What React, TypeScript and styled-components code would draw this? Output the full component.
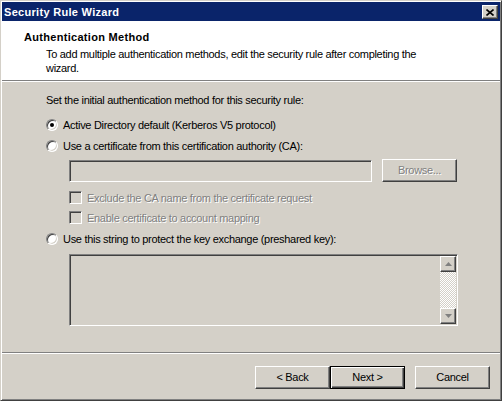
import React from "react";
import styled, { createGlobalStyle, css } from "styled-components";

const Global = createGlobalStyle`
  html, body { margin: 0; padding: 0; background: #ffffff; }
  body {
    font-family: "Liberation Sans", Arial, sans-serif;
    font-size: 11px;
    letter-spacing: -0.3px;
    color: #000;
  }
  #root { width: 503px; height: 403px; overflow: hidden; }
`;

const Window = styled.div`
  box-sizing: border-box;
  width: 502px;
  height: 401px;
  background: #d4d0c8;
  border: 1px solid;
  border-color: #d4d0c8 #404040 #404040 #d4d0c8;
  box-shadow: inset 1px 1px #ffffff, inset -1px -1px #808080;
  padding: 1px;
  display: flex;
  flex-direction: column;
`;

const TitleBar = styled.div`
  height: 19px;
  flex: 0 0 19px;
  background: #0a246a;
  display: flex;
  align-items: center;
  justify-content: space-between;
  padding: 0 2px;
`;

const TitleText = styled.span`
  color: #ffffff;
  font-weight: bold;
  font-size: 11px;
  letter-spacing: 0.3px;
`;

const raised = css`
  background: #d4d0c8;
  border: 1px solid;
  border-color: #ffffff #404040 #404040 #ffffff;
  box-shadow: inset -1px -1px #808080;
`;

const sunken = css`
  border: 1px solid;
  border-color: #808080 #ffffff #ffffff #808080;
  box-shadow: inset 1px 1px #404040, inset -1px -1px #d4d0c8;
`;

const CloseButton = styled.div`
  ${raised};
  box-sizing: border-box;
  width: 16px;
  height: 14px;
  display: flex;
  align-items: center;
  justify-content: center;
  margin-top: 1px;
`;

const Header = styled.div`
  height: 59px;
  flex: 0 0 59px;
  background: #ffffff;
  box-sizing: border-box;
  padding: 10px 60px 0 22px;
`;

const HeaderTitle = styled.div`
  font-weight: bold;
  line-height: 13px;
  letter-spacing: 0.3px;
`;

const HeaderSub = styled.div`
  margin-top: 3px;
  padding-left: 22px;
  line-height: 14px;
`;

const Separator = styled.div`
  height: 1px;
  flex: 0 0 1px;
  background: #808080;
  border-bottom: 1px solid #ffffff;
`;

const Body = styled.div`
  flex: 1;
  box-sizing: border-box;
  padding: 12px 0 0 44px;
  display: flex;
  flex-direction: column;
`;

const Text = styled.div<{ $gap?: number }>`
  line-height: 13px;
  margin-top: ${(p) => p.$gap ?? 0}px;
`;

const Row = styled.div<{ $gap: number; $indent?: number }>`
  display: flex;
  align-items: center;
  height: 13px;
  margin-top: ${(p) => p.$gap}px;
  margin-left: ${(p) => p.$indent ?? 0}px;
`;

const Radio = styled.span<{ $checked?: boolean }>`
  box-sizing: border-box;
  width: 12px;
  height: 12px;
  border-radius: 50%;
  background: #ffffff;
  border: 1px solid;
  border-color: #808080 #ffffff #ffffff #808080;
  box-shadow: inset 1px 1px #404040, inset -1px -1px #d4d0c8;
  display: flex;
  align-items: center;
  justify-content: center;
  margin-right: 5px;
  &::after {
    content: "";
    display: ${(p) => (p.$checked ? "block" : "none")};
    width: 4px;
    height: 4px;
    border-radius: 50%;
    background: #000;
  }
`;

const Checkbox = styled.span`
  ${sunken};
  box-sizing: border-box;
  width: 13px;
  height: 13px;
  background: #d4d0c8;
  margin-right: 5px;
`;

const Disabled = styled.span`
  color: #808080;
  text-shadow: 1px 1px #ffffff;
`;

const CertRow = styled.div`
  display: flex;
  align-items: center;
  margin-top: 7px;
  margin-left: 23px;
  height: 23px;
  gap: 10px;
`;

const TextBox = styled.div`
  ${sunken};
  box-sizing: border-box;
  width: 303px;
  height: 22px;
  background: #d4d0c8;
`;

const Button = styled.div<{ $default?: boolean; $disabled?: boolean }>`
  box-sizing: border-box;
  width: 75px;
  height: 23px;
  display: flex;
  align-items: center;
  justify-content: center;
  line-height: 13px;
  background: #d4d0c8;
  ${(p) =>
    p.$default
      ? css`
          border: 1px solid #000;
          box-shadow: inset 1px 1px #ffffff, inset -1px -1px #404040,
            inset -2px -2px #808080;
        `
      : css`
          border: 1px solid;
          border-color: #ffffff #404040 #404040 #ffffff;
          box-shadow: inset -1px -1px #808080;
        `}
  ${(p) =>
    p.$disabled &&
    css`
      color: #808080;
      text-shadow: 1px 1px #ffffff;
    `}
`;

const TextArea = styled.div`
  ${sunken};
  box-sizing: border-box;
  width: 389px;
  height: 72px;
  margin-top: 9px;
  margin-left: 23px;
  background: #d4d0c8;
  display: flex;
  justify-content: flex-end;
  padding: 1px;
`;

const ScrollBar = styled.div`
  width: 16px;
  display: flex;
  flex-direction: column;
`;

const ScrollArrow = styled.div`
  ${raised};
  box-sizing: border-box;
  width: 16px;
  height: 16px;
  flex: 0 0 16px;
  display: flex;
  align-items: center;
  justify-content: center;
`;

const ScrollTrack = styled.div`
  flex: 1;
  background-color: #ffffff;
  background-image: repeating-conic-gradient(#d4d0c8 0 25%, #ffffff 0 50%);
  background-size: 2px 2px;
`;

const ButtonBar = styled.div`
  height: 45px;
  flex: 0 0 45px;
  box-sizing: border-box;
  padding: 12px 10px 0 0;
  display: flex;
  justify-content: flex-end;
  align-items: flex-start;
`;

const Spacer = styled.div`
  width: 10px;
`;

const Arrow = ({ up }: { up?: boolean }) => (
  <svg width="7" height="4" viewBox="0 0 7 4">
    <polygon
      points={up ? "3.5,0 7,4 0,4" : "0,0 7,0 3.5,4"}
      fill="#808080"
    />
  </svg>
);

export default function App() {
  return (
    <>
      <Global />
      <Window>
        <TitleBar>
          <TitleText>Security Rule Wizard</TitleText>
          <CloseButton>
            <svg width="8" height="7" viewBox="0 0 8 7">
              <path d="M0.5 0.5 L7.5 6.5 M7.5 0.5 L0.5 6.5" stroke="#000" strokeWidth="1.6" />
            </svg>
          </CloseButton>
        </TitleBar>
        <Header>
          <HeaderTitle>Authentication Method</HeaderTitle>
          <HeaderSub>
            To add multiple authentication methods, edit the security rule after completing the wizard.
          </HeaderSub>
        </Header>
        <Separator />
        <Body>
          <Text>Set the initial authentication method for this security rule:</Text>
          <Row $gap={11}>
            <Radio $checked />
            Active Directory default (Kerberos V5 protocol)
          </Row>
          <Row $gap={8}>
            <Radio />
            Use a certificate from this certification authority (CA):
          </Row>
          <CertRow>
            <TextBox />
            <Button $disabled>Browse...</Button>
          </CertRow>
          <Row $gap={9} $indent={23}>
            <Checkbox />
            <Disabled>Exclude the CA name from the certificate request</Disabled>
          </Row>
          <Row $gap={7} $indent={23}>
            <Checkbox />
            <Disabled>Enable certificate to account mapping</Disabled>
          </Row>
          <Row $gap={8}>
            <Radio />
            Use this string to protect the key exchange (preshared key):
          </Row>
          <TextArea>
            <ScrollBar>
              <ScrollArrow>
                <Arrow up />
              </ScrollArrow>
              <ScrollTrack />
              <ScrollArrow>
                <Arrow />
              </ScrollArrow>
            </ScrollBar>
          </TextArea>
        </Body>
        <Separator />
        <ButtonBar>
          <Button>&lt; Back</Button>
          <Button $default>Next &gt;</Button>
          <Spacer />
          <Button>Cancel</Button>
        </ButtonBar>
      </Window>
    </>
  );
}
